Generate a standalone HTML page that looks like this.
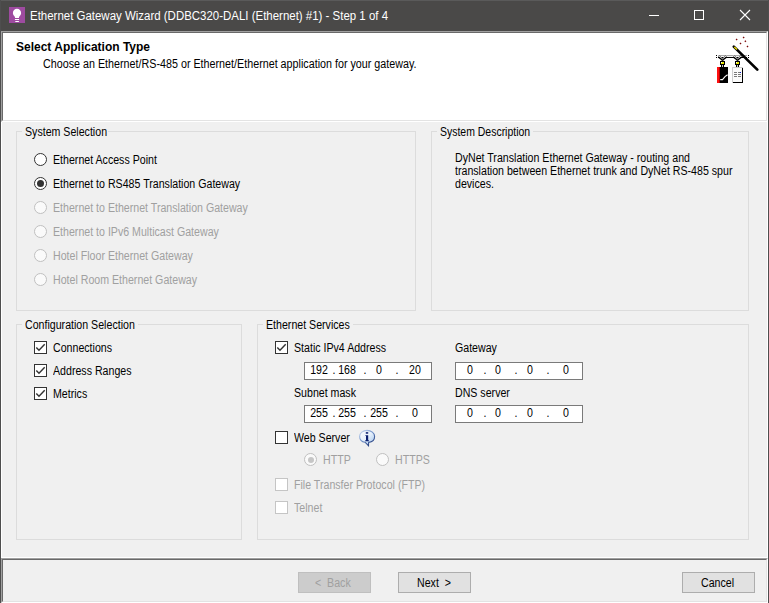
<!DOCTYPE html>
<html><head><meta charset="utf-8">
<style>
*{margin:0;padding:0;box-sizing:border-box}
html,body{width:769px;height:603px;overflow:hidden;background:#f0f0f0;position:relative}
div,span{position:absolute}
.t{font-family:"Liberation Sans",sans-serif;font-size:12px;line-height:12px;white-space:nowrap;color:#000;transform-origin:0 0;transform:scaleX(0.885)}
.d{color:#a0a0a0}
.c{text-align:center;transform-origin:50% 0}
.gb{border:1px solid #dcdcdc}
.gl{background:#f0f0f0;height:14px;top:-8px;left:6px}
.cb{width:13px;height:13px;border:1px solid #333;background:#fff}
.cbd{border-color:#c5c5c5;background:#fff}
.rb{width:13px;height:13px;border:1px solid #333;background:#fff;border-radius:50%}
.rbd{border-color:#c0c0c0;background:#fafafa}
.ip{width:128px;height:18px;border:1px solid #7a7a7a;background:#fff}
.btn{width:73px;height:21px;border:1px solid #adadad;background:#e1e1e1}
</style></head><body>
<!-- window frame -->
<div style="left:0;top:0;width:769px;height:31px;background:#4a4948"></div>
<div style="left:0;top:0;width:769px;height:1px;background:#5a5a5a"></div>
<div style="left:0;top:0;width:1px;height:603px;background:#4e4e4e"></div>
<div style="left:768px;top:0;width:1px;height:603px;background:#4e4e4e"></div>

<!-- title icon -->
<div style="left:9px;top:7px;width:16px;height:16px;background:#9e4ba0">
  <svg width="16" height="16" viewBox="0 0 16 16" style="position:absolute;left:0;top:0">
    <path d="M8 1.8c-2.3 0-4.1 1.8-4.1 4.1 0 1.4 0.7 2.4 1.4 3.2 0.5 0.6 0.8 1.2 0.8 1.9h3.8c0-0.7 0.3-1.3 0.8-1.9 0.7-0.8 1.4-1.8 1.4-3.2 0-2.3-1.8-4.1-4.1-4.1z" fill="#fff"/>
    <rect x="5.9" y="12" width="4.2" height="1" fill="#fff"/>
    <rect x="6.3" y="14" width="3.6" height="1" fill="#fff"/>
  </svg>
</div>
<div class="t" style="left:30px;top:10px;font-size:12.5px;line-height:12.5px;color:#fff;transform:scaleX(0.917)">Ethernet Gateway Wizard (DDBC320-DALI (Ethernet) #1) - Step 1 of 4</div>

<!-- window controls -->
<div style="left:649px;top:15px;width:10px;height:1px;background:#fff"></div>
<div style="left:694px;top:10px;width:10px;height:10px;border:1px solid #fff"></div>
<svg width="12" height="12" viewBox="0 0 12 12" style="position:absolute;left:739px;top:9px">
  <path d="M1 1L11 11M11 1L1 11" stroke="#fff" stroke-width="1.1"/>
</svg>

<!-- header panel -->
<div style="left:1px;top:31px;width:767px;height:91px;background:#fff;border-top:1px solid #a0a0a0;border-left:1px solid #a0a0a0;border-right:1px solid #fff;border-bottom:1px solid #fff">
  <div style="left:0;top:0;right:0;bottom:0;border-top:1px solid #696969;border-left:1px solid #696969;border-right:1px solid #e3e3e3;border-bottom:1px solid #e3e3e3"></div>
</div>
<svg width="48" height="56" viewBox="0 0 48 56" style="position:absolute;left:712px;top:32px">
  <g fill="#7a0808">
    <path d="M24.6 6.4l1 1-1 1-1-1z"/>
    <path d="M31.6 4.4l1 1-1 1-1-1z"/>
    <path d="M33.4 8.3l1 1-1 1-1-1z"/>
    <path d="M28.5 10.6l1 1-1 1-1-1z"/>
    <path d="M35.5 13.4l1 1-1 1-1-1z"/>
  </g>
  <g shape-rendering="crispEdges">
    <rect x="4" y="23" width="1" height="1" fill="#000"/>
    <rect x="4" y="25" width="1" height="1" fill="#000"/>
    <rect x="6" y="23" width="29" height="1" fill="#a8a8a8"/>
    <rect x="6" y="24" width="29" height="1" fill="#f4f4f4"/>
    <rect x="6" y="25" width="29" height="1" fill="#000"/>
    <rect x="36" y="23" width="1" height="1" fill="#000"/>
    <rect x="36" y="25" width="1" height="1" fill="#000"/>
    <rect x="9" y="27" width="3" height="2" fill="#b8b8b8"/>
    <rect x="24" y="27" width="3" height="2" fill="#b8b8b8"/>
    <rect x="8" y="29" width="5" height="4" fill="#000"/>
    <rect x="9" y="30" width="3" height="2" fill="#e8e800"/>
    <rect x="9" y="30" width="1" height="1" fill="#fff"/>
    <rect x="23" y="29" width="5" height="4" fill="#000"/>
    <rect x="24" y="30" width="3" height="2" fill="#e8e800"/>
    <rect x="24" y="30" width="1" height="1" fill="#fff"/>
    <rect x="9" y="33" width="3" height="2" fill="#000"/>
    <rect x="10" y="33" width="1" height="2" fill="#c8c8c8"/>
    <rect x="24" y="33" width="3" height="2" fill="#000"/>
    <rect x="25" y="33" width="1" height="2" fill="#c8c8c8"/>
    <rect x="5" y="35" width="11" height="16" fill="#000"/>
    <rect x="5" y="35" width="2" height="16" fill="#ff1010"/>
    <rect x="7" y="35" width="1" height="16" fill="#b00000"/>
    <rect x="20" y="35" width="11" height="16" fill="#cfcfcf"/>
    <rect x="21" y="36" width="10" height="15" fill="#000"/>
    <rect x="21" y="36" width="9" height="14" fill="#fbfbfb"/>
    <rect x="22" y="40" width="3" height="1" fill="#7a7a7a"/>
    <rect x="26" y="40" width="2" height="1" fill="#7a7a7a"/>
    <rect x="28" y="40" width="1" height="1" fill="#1020c0"/>
    <rect x="22" y="42" width="3" height="1" fill="#7a7a7a"/>
    <rect x="26" y="42" width="3" height="1" fill="#7a7a7a"/>
    <rect x="22" y="44" width="3" height="1" fill="#7a7a7a"/>
    <rect x="26" y="44" width="3" height="1" fill="#7a7a7a"/>
  </g>
  <path d="M6.5 24.5L10.5 27.5L14.5 24.5M21.5 24.5L25.5 27.5L29.5 24.5" stroke="#000" stroke-width="2.4" fill="none"/>
  <path d="M6.5 23.8L10.5 26.8L14.5 23.8M21.5 23.8L25.5 26.8L29.5 23.8" stroke="#e8e8e8" stroke-width="1" fill="none"/>
  <path d="M8.2 47.6h2.3l2.5-3 2.6-1.8" stroke="#fff" stroke-width="1.1" fill="none"/>
  <path d="M21.8 14.6L45.3 37.6" stroke="#000" stroke-width="2.7" stroke-linecap="round"/>
  <path d="M22.3 14.9L25 17.4" stroke="#f0e000" stroke-width="1.3"/>
</svg>
<div class="t" style="left:16px;top:41px;font-weight:bold;font-size:12.5px;line-height:12.5px;transform:scaleX(0.96)">Select Application Type</div>
<div class="t" style="left:43px;top:58px;transform:scaleX(0.895)">Choose an Ethernet/RS-485 or Ethernet/Ethernet application for your gateway.</div>

<!-- body edges -->
<div style="left:1px;top:122px;width:1px;height:436px;background:#fff"></div>
<div style="left:767px;top:122px;width:1px;height:436px;background:#fff"></div>
<div style="left:1px;top:557px;width:767px;height:1px;background:#fff"></div>

<!-- System Selection -->
<div class="gb" style="left:16px;top:131px;width:400px;height:180px"></div>
<div class="gl" style="left:22px;top:124px;width:86px"></div>
<div class="t" style="left:25px;top:126px">System Selection</div>
<div class="rb" style="left:34px;top:153px"></div>
<div class="t" style="left:53px;top:154px">Ethernet Access Point</div>
<div class="rb" style="left:34px;top:177px"><div style="left:2px;top:2px;width:7px;height:7px;border-radius:50%;background:#333"></div></div>
<div class="t" style="left:53px;top:178px">Ethernet to RS485 Translation Gateway</div>
<div class="rb rbd" style="left:34px;top:201px"></div>
<div class="t d" style="left:53px;top:202px">Ethernet to Ethernet Translation Gateway</div>
<div class="rb rbd" style="left:34px;top:225px"></div>
<div class="t d" style="left:53px;top:226px">Ethernet to IPv6 Multicast Gateway</div>
<div class="rb rbd" style="left:34px;top:249px"></div>
<div class="t d" style="left:53px;top:250px">Hotel Floor Ethernet Gateway</div>
<div class="rb rbd" style="left:34px;top:273px"></div>
<div class="t d" style="left:53px;top:274px">Hotel Room Ethernet Gateway</div>

<!-- System Description -->
<div class="gb" style="left:431px;top:131px;width:318px;height:180px"></div>
<div class="gl" style="left:437px;top:124px;width:96px"></div>
<div class="t" style="left:440px;top:126px;transform:scaleX(0.872)">System Description</div>
<div class="t" style="left:455px;top:152px">DyNet Translation Ethernet Gateway - routing and</div>
<div class="t" style="left:455px;top:165px">translation between Ethernet trunk and DyNet RS-485 spur</div>
<div class="t" style="left:455px;top:178px">devices.</div>

<!-- Configuration Selection -->
<div class="gb" style="left:16px;top:324px;width:226px;height:216px"></div>
<div class="gl" style="left:22px;top:317px;width:116px"></div>
<div class="t" style="left:25px;top:319px">Configuration Selection</div>
<div class="cb" style="left:34px;top:341px"><svg width="11" height="11" style="position:absolute;left:0;top:0"><path d="M1.3 5.4L4 8.2L9.7 2.3" stroke="#333" stroke-width="1.45" fill="none"/></svg></div>
<div class="t" style="left:53px;top:342px">Connections</div>
<div class="cb" style="left:34px;top:364px"><svg width="11" height="11" style="position:absolute;left:0;top:0"><path d="M1.3 5.4L4 8.2L9.7 2.3" stroke="#333" stroke-width="1.45" fill="none"/></svg></div>
<div class="t" style="left:53px;top:365px">Address Ranges</div>
<div class="cb" style="left:34px;top:387px"><svg width="11" height="11" style="position:absolute;left:0;top:0"><path d="M1.3 5.4L4 8.2L9.7 2.3" stroke="#333" stroke-width="1.45" fill="none"/></svg></div>
<div class="t" style="left:53px;top:388px">Metrics</div>

<!-- Ethernet Services -->
<div class="gb" style="left:257px;top:324px;width:492px;height:216px"></div>
<div class="gl" style="left:263px;top:317px;width:90px"></div>
<div class="t" style="left:266px;top:319px">Ethernet Services</div>
<div class="cb" style="left:275px;top:341px"><svg width="11" height="11" style="position:absolute;left:0;top:0"><path d="M1.3 5.4L4 8.2L9.7 2.3" stroke="#333" stroke-width="1.45" fill="none"/></svg></div>
<div class="t" style="left:294px;top:342px">Static IPv4 Address</div>
<div class="t" style="left:455px;top:342px">Gateway</div>

<div class="ip" style="left:304px;top:362px"></div>
<div class="ip" style="left:455px;top:362px"></div>
<div class="t" style="left:294px;top:387px">Subnet mask</div>
<div class="t" style="left:455px;top:387px">DNS server</div>
<div class="ip" style="left:304px;top:405px"></div>
<div class="ip" style="left:455px;top:405px"></div>

<div class="t c" style="left:298.5px;top:364px;width:40px">192</div>
<div class="t c" style="left:327.0px;top:364px;width:40px">168</div>
<div class="t c" style="left:359.0px;top:364px;width:40px">0</div>
<div class="t c" style="left:394.5px;top:364px;width:40px">20</div>
<div class="t c" style="left:313.5px;top:364px;width:40px">.</div>
<div class="t c" style="left:345.3px;top:364px;width:40px">.</div>
<div class="t c" style="left:377.0px;top:364px;width:40px">.</div>
<div class="t c" style="left:449.5px;top:364px;width:40px">0</div>
<div class="t c" style="left:478.0px;top:364px;width:40px">0</div>
<div class="t c" style="left:510.0px;top:364px;width:40px">0</div>
<div class="t c" style="left:546.0px;top:364px;width:40px">0</div>
<div class="t c" style="left:464.5px;top:364px;width:40px">.</div>
<div class="t c" style="left:496.3px;top:364px;width:40px">.</div>
<div class="t c" style="left:528.0px;top:364px;width:40px">.</div>
<div class="t c" style="left:298.5px;top:407px;width:40px">255</div>
<div class="t c" style="left:327.0px;top:407px;width:40px">255</div>
<div class="t c" style="left:359.0px;top:407px;width:40px">255</div>
<div class="t c" style="left:394.5px;top:407px;width:40px">0</div>
<div class="t c" style="left:313.5px;top:407px;width:40px">.</div>
<div class="t c" style="left:345.3px;top:407px;width:40px">.</div>
<div class="t c" style="left:377.0px;top:407px;width:40px">.</div>
<div class="t c" style="left:449.5px;top:407px;width:40px">0</div>
<div class="t c" style="left:478.0px;top:407px;width:40px">0</div>
<div class="t c" style="left:510.0px;top:407px;width:40px">0</div>
<div class="t c" style="left:546.0px;top:407px;width:40px">0</div>
<div class="t c" style="left:464.5px;top:407px;width:40px">.</div>
<div class="t c" style="left:496.3px;top:407px;width:40px">.</div>
<div class="t c" style="left:528.0px;top:407px;width:40px">.</div>
<div class="cb" style="left:275px;top:431px"></div>
<div class="t" style="left:294px;top:432px">Web Server</div>
<svg width="18" height="18" viewBox="0 0 18 18" style="position:absolute;left:358px;top:429px">
  <defs><linearGradient id="ig" x1="0" y1="0" x2="1" y2="1"><stop offset="0" stop-color="#ffffff"/><stop offset="0.5" stop-color="#e4effb"/><stop offset="1" stop-color="#9cc0ea"/></linearGradient>
  <linearGradient id="is" x1="0.1" y1="0" x2="0.9" y2="1"><stop offset="0" stop-color="#c8d8f0"/><stop offset="0.45" stop-color="#6f90c8"/><stop offset="1" stop-color="#10286a"/></linearGradient></defs>
  <path d="M9 1.4C4.9 1.4 1.6 4 1.6 7.4c0 3 2.3 5.3 5.6 5.9l3.3 3.3 0.1-3.2c3.5-0.5 6-2.9 6-6 0-3.4-3.4-6-7.6-6z" fill="url(#ig)" stroke="url(#is)" stroke-width="1.1"/>
  <path d="M7.3 4l1.7-1.3 1.7 1.3-1.7 1.1z" fill="#0a1e6e"/>
  <path d="M7.4 6.2h2.8v5h0.7v1H7.2v-1h0.8V7.1h-0.6z" fill="#0a1e6e"/>
</svg>

<div class="rb rbd" style="left:304px;top:453px"><div style="left:2.5px;top:2.5px;width:6px;height:6px;border-radius:50%;background:#c6c6c6"></div></div>
<div class="t d" style="left:323px;top:454px">HTTP</div>
<div class="rb rbd" style="left:376px;top:453px"></div>
<div class="t d" style="left:395px;top:454px">HTTPS</div>
<div class="cb cbd" style="left:275px;top:478px"></div>
<div class="t d" style="left:294px;top:479px">File Transfer Protocol (FTP)</div>
<div class="cb cbd" style="left:275px;top:501px"></div>
<div class="t d" style="left:294px;top:502px">Telnet</div>

<!-- footer -->
<div style="left:1px;top:558px;width:767px;height:45px;border-top:1px solid #a0a0a0;border-left:1px solid #a0a0a0;border-right:1px solid #fff;border-bottom:1px solid #fff">
  <div style="left:0;top:0;right:0;bottom:0;border-top:1px solid #696969;border-left:1px solid #696969;border-right:1px solid #e3e3e3;border-bottom:1px solid #e3e3e3"></div>
</div>
<div class="btn" style="left:298px;top:572px;background:#cccccc;border-color:#bfbfbf"></div>
<div class="t" style="left:315px;top:577px;color:#a0a0a0">&lt;&nbsp; Back</div>
<div class="btn" style="left:398px;top:572px"></div>
<div class="t" style="left:417px;top:577px">Next&nbsp; &gt;</div>
<div class="btn" style="left:682px;top:572px"></div>
<div class="t" style="left:701px;top:577px">Cancel</div>
</body></html>
